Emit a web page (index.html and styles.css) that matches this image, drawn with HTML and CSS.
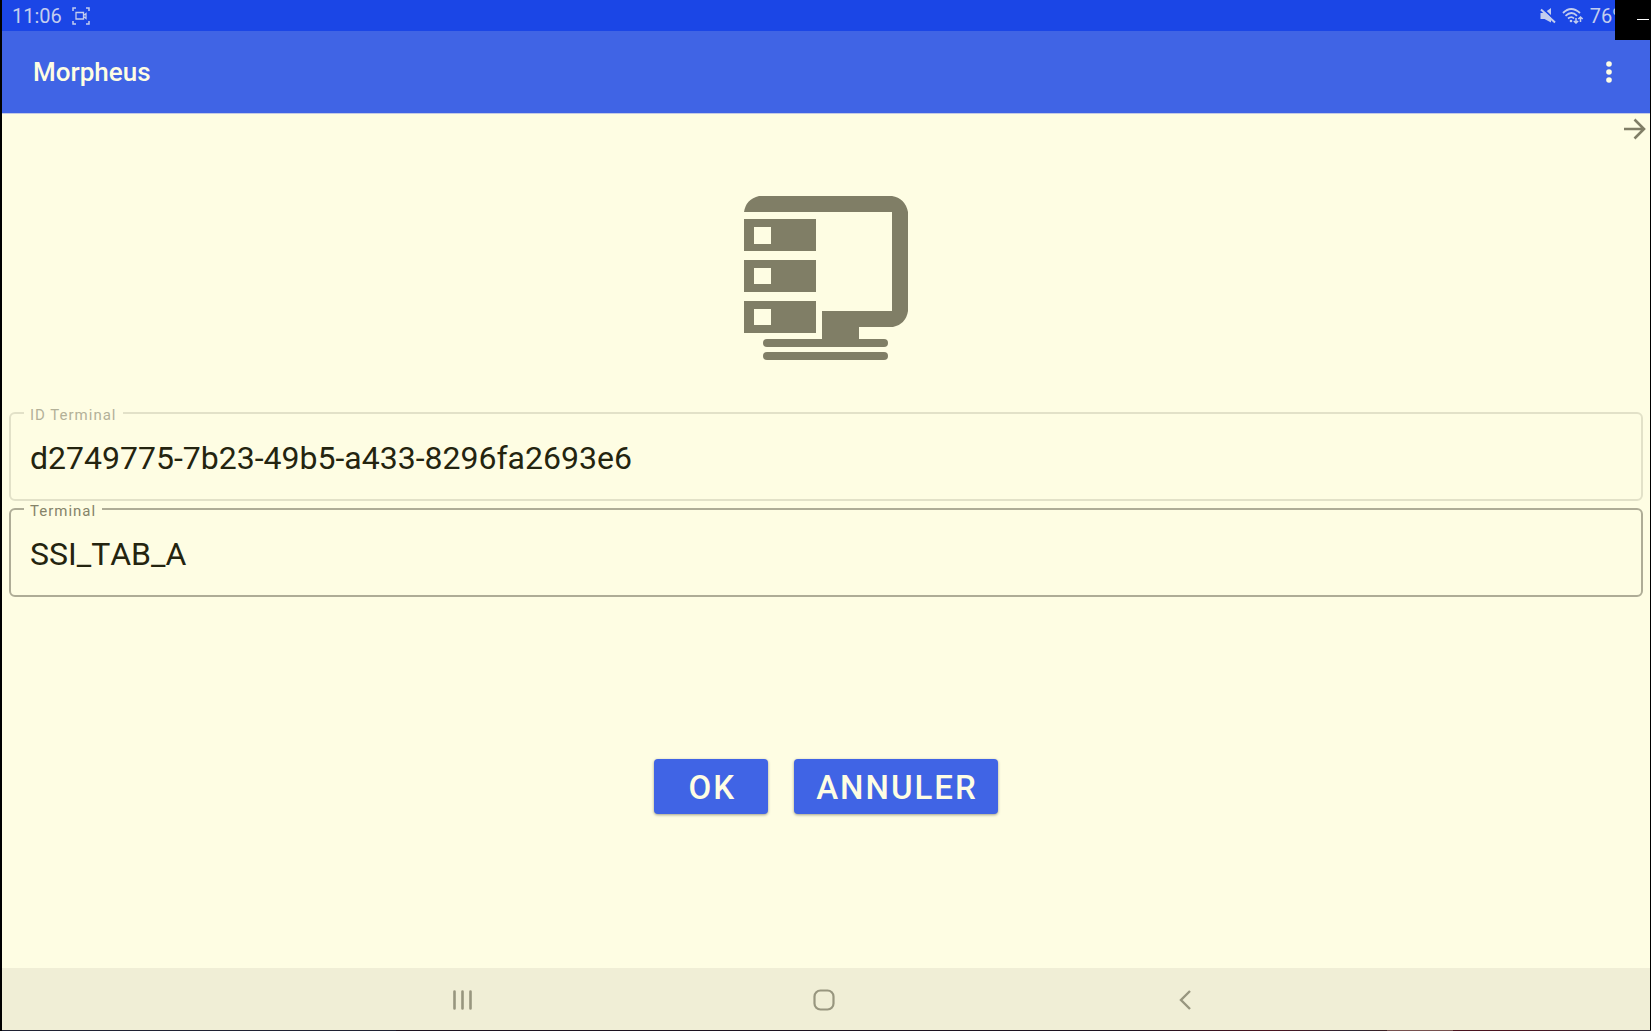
FILE: index.html
```html
<!DOCTYPE html>
<html lang="fr">
<head>
<meta charset="utf-8">
<meta name="viewport" content="width=device-width, initial-scale=1">
<title>Morpheus</title>
<link rel="stylesheet" href="styles.css">
</head>
<body>
<div class="screen">
  <div class="status-bar">
    <div class="status-group">
      <span>11:06</span>
      <svg class="capture-icon" width="18" height="18" viewBox="0 0 18 18" fill="none" stroke="currentColor" aria-hidden="true">
        <path stroke-width="1.5" d="M1 4V1H4M14 1H17V4M17 14V17H14M4 17H1V14"/>
        <path stroke-width="1.3" d="M4 5.5H11.5V12H4ZM11.5 8.5L14 6.5V11.5L11.5 9.5"/>
      </svg>
    </div>
    <div class="status-group status-right">
      <svg width="16" height="16" viewBox="0 0 16 16" aria-hidden="true">
        <path fill="currentColor" d="M0.500 5H4L11 0V14.500L4.500 11H0.500Z"/>
        <path stroke="#1b46e6" stroke-width="2" d="M2 0L16 13"/>
        <path stroke="currentColor" stroke-width="2" d="M1 1.5L15 14.5"/>
      </svg>
      <svg width="22" height="18" viewBox="0 0 22 18" fill="none" stroke="currentColor" stroke-width="1.800" aria-hidden="true">
        <path d="M1 6Q9 -2 18 6M3.500 8.800Q9.500 3.200 15 8.800M6 11.500Q9.500 8.700 12 11.500"/>
        <circle cx="9" cy="14" r="1.300" fill="currentColor" stroke="none"/>
        <path stroke-width="1.500" d="M14 11V16M11.800 14L14 16L16.200 14M18.500 15V10M16.300 12L18.500 10L20.700 12"/>
      </svg>
      <span>76%</span>
    </div>
  </div>

  <header class="app-bar">
    <h1 class="app-title">Morpheus</h1>
    <button class="icon-button" type="button" aria-label="Menu">
      <svg width="8" height="24" viewBox="0 0 8 24" fill="currentColor" aria-hidden="true">
        <circle cx="4" cy="4" r="2.800"/><circle cx="4" cy="12" r="2.800"/><circle cx="4" cy="20" r="2.800"/>
      </svg>
    </button>
  </header>

  <main class="content">
    <button class="icon-button next-button" type="button" aria-label="Suivant">
      <svg width="22" height="22" viewBox="0 0 22 22" fill="none" stroke="currentColor" stroke-width="2.600" aria-hidden="true">
        <path d="M0 11H19.500M10.500 1.500L20 11L10.500 20.500"/>
      </svg>
    </button>
    <svg class="terminal-icon" width="164" height="164" viewBox="0 0 164 164" fill="currentColor" aria-hidden="true">
      <path d="M0 16Q2 3 15 0H148Q161 2 164 16V115Q162 128 149 131H115V144H78V115H148V16Z"/>
      <path fill-rule="evenodd" d="M0 23H72V55H0ZM10 31V48H27V31ZM0 64H72V96H0ZM10 72V88H27V72ZM0 105H72V137H0ZM10 113V129H27V113Z"/>
      <rect x="19" y="143" width="125" height="8" rx="4"/>
      <rect x="19" y="156" width="125" height="8" rx="4"/>
    </svg>
    <form class="form">
      <fieldset class="field field-disabled">
        <legend><label for="terminal-id">ID Terminal</label></legend>
        <input id="terminal-id" type="text" value="d2749775-7b23-49b5-a433-8296fa2693e6" readonly>
      </fieldset>
      <fieldset class="field">
        <legend><label for="terminal-name">Terminal</label></legend>
        <input id="terminal-name" type="text" value="SSI_TAB_A">
      </fieldset>
      <div class="actions">
        <button class="button" type="button">OK</button>
        <button class="button" type="button">ANNULER</button>
      </div>
    </form>
  </main>

  <nav class="system-nav" aria-label="Navigation">
    <button class="icon-button" type="button" aria-label="Applications">
      <svg width="22" height="22" viewBox="0 0 22 22" stroke="currentColor" stroke-width="2.600" stroke-linecap="round" aria-hidden="true"><path d="M2.500 2.500V19.500M10.500 2.500V19.500M18.500 2.500V19.500"/></svg>
    </button>
    <button class="icon-button" type="button" aria-label="Accueil">
      <svg width="22" height="22" viewBox="0 0 22 22" fill="none" stroke="currentColor" stroke-width="2.200" aria-hidden="true"><rect x="1.500" y="1.500" width="19" height="19" rx="6"/></svg>
    </button>
    <button class="icon-button" type="button" aria-label="Retour">
      <svg width="22" height="22" viewBox="0 0 22 22" fill="none" stroke="currentColor" stroke-width="2.400" aria-hidden="true"><path d="M16 2L7 11L16 20"/></svg>
    </button>
  </nav>
</div>
<button class="minimize" type="button" aria-label="Réduire"></button>
</body>
</html>
```
FILE: styles.css
```css
* { box-sizing: border-box; }

body {
  margin: 0;
  background: #000;
  font-family: Roboto, "Noto Sans", sans-serif;
  color: #24240f;
}

button {
  margin: 0;
  border: 0;
  font-family: inherit;
}

svg { display: block; }

.screen {
  display: flex;
  flex-direction: column;
  min-height: 100vh;
  padding: 0 1px 1px 2px;
  background: linear-gradient(#000, #000) left / 2px 100% no-repeat,
    linear-gradient(90deg, #1f2133 0 24%, #1c1220 24% 68%, #4a1320 77%, #2c2533 82%, #3d1f24 84%, #76504f 84% 88%, #4a1320 88% 92%, #2c2a38) bottom / 100% 1px no-repeat;
}

.status-bar {
  display: flex;
  justify-content: space-between;
  align-items: center;
  height: 31px;
  padding: 0 0 0 10px;
  overflow: hidden;
  background: #1b46e6;
  color: #c3cdee;
  font-size: 20px;
}

.status-group {
  display: flex;
  align-items: center;
  gap: 10px;
}

.status-right { gap: 6px; padding-right: 23px; }

.app-bar {
  display: flex;
  justify-content: space-between;
  align-items: center;
  height: 83px;
  padding: 0 37px 0 31px;
  border-bottom: 1px solid #c4cbe4;
  background: #4064e5;
  color: #fefde3;
}

.app-title {
  margin: 0;
  font-size: 26px;
  font-weight: 500;
}

.icon-button {
  padding: 0;
  background: transparent;
  color: inherit;
}

.content {
  display: flex;
  flex: 1;
  flex-direction: column;
  padding: 4px 7px 0;
  background: #fefde3;
}

.next-button {
  align-self: flex-end;
  margin-right: -3px;
  color: #807e66;
}

.terminal-icon {
  align-self: center;
  margin: 56px 0 44px;
  color: #807e66;
}

.form {
  display: flex;
  flex: 1;
  flex-direction: column;
}

.field {
  height: 97px;
  min-width: 0;
  margin: 0 0 -1px;
  padding: 0 19px;
  border: 2px solid #aeac96;
  border-radius: 6px;
  color: #858369;
}

.field-disabled {
  border-color: #e2e1c8;
  color: #b3b199;
}

.field legend {
  margin-left: -6px;
  padding: 4px 6px 0;
  font-size: 15px;
  line-height: 14px;
  letter-spacing: 1px;
}

.field input {
  display: block;
  width: 100%;
  height: 72px;
  padding: 0;
  border: 0;
  outline: 0;
  background: transparent;
  color: #24240f;
  font: 32px Roboto, "Noto Sans", sans-serif;
  font-kerning: none;
}

.actions {
  display: flex;
  flex: 1;
  justify-content: center;
  align-items: center;
  gap: 26px;
  padding-top: 8px;
}

.button {
  min-width: 114px;
  height: 55px;
  padding: 2px 20px 0 22px;
  border-radius: 4px;
  background: #4064e5;
  box-shadow: 0 1px 3px #a09f89;
  color: #fefde3;
  font-size: 33px;
  font-weight: 500;
  letter-spacing: 2px;
}

.system-nav {
  display: flex;
  justify-content: center;
  align-items: center;
  gap: 339px;
  height: 62px;
  padding: 2px 5px 0 0;
  background: #f0eed6;
  color: #98967f;
}

/* Window control lying over the mirrored device screen */
.minimize {
  position: absolute;
  top: 0;
  right: 0;
  width: 36px;
  height: 40px;
  padding: 0;
  background: linear-gradient(#fff, #fff) 22px 19px / 12px 1px no-repeat #000;
}
```
